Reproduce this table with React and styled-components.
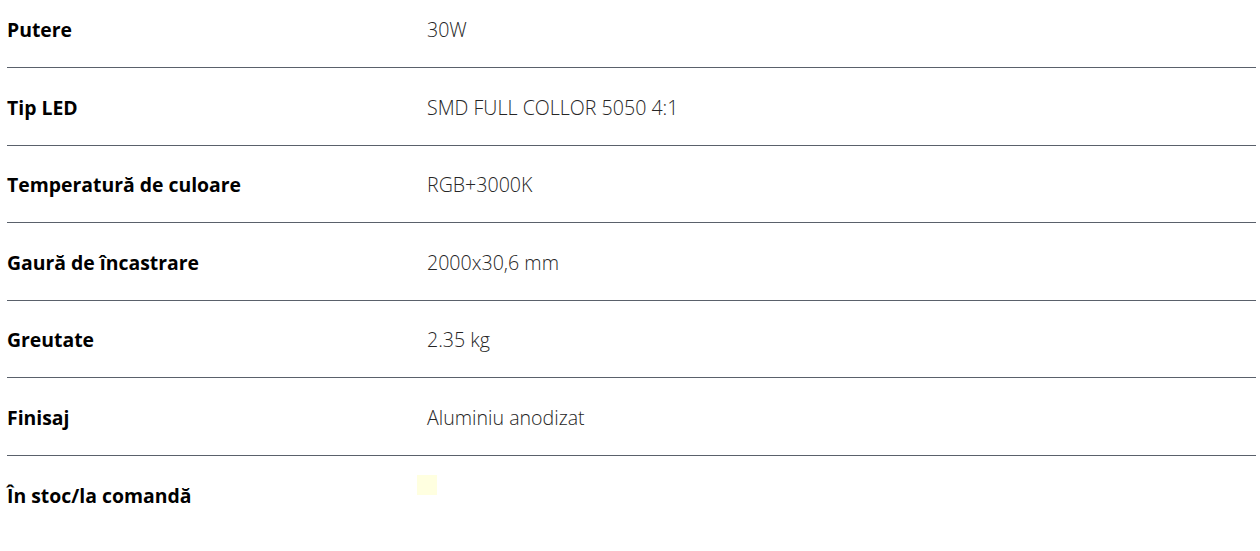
import React from 'react'
import styled, { createGlobalStyle } from 'styled-components'

const GlobalStyle = createGlobalStyle`
    html, body {
        margin: 0;
        padding: 0;
        background: #fff;
    }
    body {
        font-family: 'Open Sans', 'Liberation Sans', sans-serif;
        overflow: hidden;
    }
`

const specs = [
    { label: 'Putere', value: '30W' },
    { label: 'Tip LED', value: 'SMD FULL COLLOR 5050 4:1' },
    { label: 'Temperatură de culoare', value: 'RGB+3000K' },
    { label: 'Gaură de încastrare', value: '2000x30,6 mm' },
    { label: 'Greutate', value: '2.35 kg' },
    { label: 'Finisaj', value: 'Aluminiu anodizat' },
    { label: 'În stoc/la comandă', swatch: '#ffffe0' },
]

const App = () => {
    return (
        <>
            <GlobalStyle />
            <SpecTable>
                {specs.map((s, i) => (
                    <Row key={s.label} last={i === specs.length - 1}>
                        <Label>{s.label}</Label>
                        {s.swatch ? (
                            <Swatch color={s.swatch} />
                        ) : (
                            <Value>{s.value}</Value>
                        )}
                    </Row>
                ))}
            </SpecTable>
        </>
    )
}

const SpecTable = styled.div`
    margin: -9.5px 0 0 7px;
    width: 1249px;
    display: flex;
    flex-direction: column;
`

const Row = styled.div`
    box-sizing: border-box;
    display: grid;
    grid-template-columns: 420px 1fr;
    align-items: center;
    height: 77.5px;
    padding-top: 2px;
    border-bottom: ${({ last }) => (last ? 'none' : '1px solid #5a616b')};
`

const Label = styled.div`
    font-weight: 700;
    font-size: 19.4px;
    color: #000;
`

const Value = styled.div`
    font-weight: 300;
    font-size: 19.6px;
    color: #262626;
`

const Swatch = styled.div`
    width: 20px;
    height: 20px;
    margin-left: -10px;
    align-self: start;
    margin-top: 17px;
    background: ${({ color }) => color};
`

export default App
